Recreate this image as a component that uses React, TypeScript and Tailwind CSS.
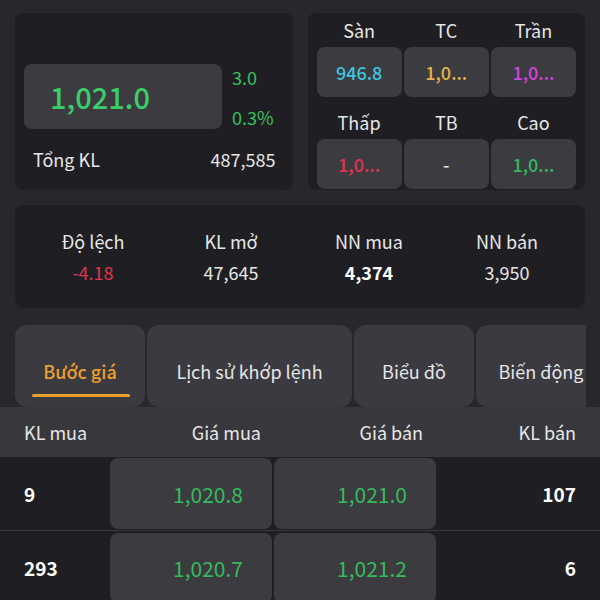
const stats = [
  [
    { label: "Sàn", value: "946.8", color: "text-[#3fc6df]" },
    { label: "TC", value: "1,0...", color: "text-[#e3b447]" },
    { label: "Trần", value: "1,0...", color: "text-[#d541dc]" },
  ],
  [
    { label: "Thấp", value: "1,0...", color: "text-[#e0334f]" },
    { label: "TB", value: "-", color: "text-[#e6e6e6]" },
    { label: "Cao", value: "1,0...", color: "text-[#35b85e]" },
  ],
];

const summary = [
  { label: "Độ lệch", value: "-4.18", cls: "text-[#e0334f]" },
  { label: "KL mở", value: "47,645", cls: "text-[#e6e6e6]" },
  { label: "NN mua", value: "4,374", cls: "text-white font-semibold" },
  { label: "NN bán", value: "3,950", cls: "text-[#e6e6e6]" },
];

const tabs = [
  { label: "Bước giá", w: "w-[130px]" },
  { label: "Lịch sử khớp lệnh", w: "w-[205px]" },
  { label: "Biểu đồ", w: "w-[120px]" },
  { label: "Biến động", w: "w-[130px]" },
];

const rows = [
  { buyQty: "9", buy: "1,020.8", sell: "1,021.0", sellQty: "107" },
  { buyQty: "293", buy: "1,020.7", sell: "1,021.2", sellQty: "6" },
];

export default function App() {
  return (
    <div className="h-[600px] w-[600px] overflow-hidden bg-[#28282c] font-['Noto_Sans_CJK_SC',sans-serif] text-[#e6e6e6]">
      {/* Price + reference prices */}
      <div className="flex gap-[15px] px-[15px] pt-[13px]">
        <div className="flex h-[177px] flex-1 flex-col rounded-lg bg-[#1f1f23] px-[9px]">
          <div className="mt-[51px] flex items-center">
            <div className="flex h-[65px] w-[198px] items-center rounded-lg bg-[#3b3b40] pl-[26px] text-[29px] font-medium leading-none text-[#3acd68]">
              1,021.0
            </div>
            <div className="ml-[10px] flex flex-col gap-[16px] text-[18px] leading-[24px] text-[#38c061]">
              <span>3.0</span>
              <span>0.3%</span>
            </div>
          </div>
          <div className="mt-[18px] flex items-center justify-between pl-[9px] pr-[8px] text-[18px] leading-[24px]">
            <span>Tổng KL</span>
            <span>487,585</span>
          </div>
        </div>

        <div className="flex h-[177px] flex-1 flex-col rounded-lg bg-[#1f1f23] px-[9px]">
          {stats.map((row, i) => (
            <div key={i} className={i === 1 ? "mt-[8px]" : ""}>
              <div className="grid h-[34px] grid-cols-3 gap-[2px] text-[18px] leading-[24px]">
                {row.map((s) => (
                  <div key={s.label} className="flex items-center justify-center">
                    {s.label}
                  </div>
                ))}
              </div>
              <div className="grid grid-cols-3 gap-[2px]">
                {row.map((s) => (
                  <div
                    key={s.label}
                    className={`flex h-[50px] items-center justify-center rounded-lg bg-[#3b3b40] text-[18px] font-medium leading-[24px] ${s.color}`}
                  >
                    {s.value}
                  </div>
                ))}
              </div>
            </div>
          ))}
        </div>
      </div>

      {/* Summary */}
      <div className="mx-[15px] mt-[15px] grid h-[103px] grid-cols-4 items-center rounded-lg bg-[#1f1f23] px-[9px]">
        {summary.map((s) => (
          <div key={s.label} className="flex flex-col items-center gap-[7px] text-[18px] leading-[24px]">
            <span>{s.label}</span>
            <span className={s.cls}>{s.value}</span>
          </div>
        ))}
      </div>

      {/* Tabs */}
      <div className="mx-[15px] mt-[17px] flex w-[571px] gap-[2px] overflow-hidden">
        {tabs.map((t, i) => (
          <div
            key={t.label}
            className={`relative flex h-[82px] shrink-0 items-center justify-center rounded-xl bg-[#3a3a40] pt-[10px] text-[18px] leading-[24px] ${t.w} ${
              i === 0 ? "font-medium text-[#ee9f2e]" : "text-[#e6e6e6]"
            }`}
          >
            <span className="whitespace-nowrap">{t.label}</span>
            {i === 0 && (
              <span className="absolute bottom-[10px] left-[17px] h-[3px] w-[98px] rounded-full bg-[#ee9f2e]" />
            )}
          </div>
        ))}
      </div>

      {/* Order book */}
      <div className="flex h-[50px] items-center bg-[#38383c] px-[24px] text-[18px] leading-[24px]">
        <span className="w-[86px]">KL mua</span>
        <span className="w-[162px] pr-[11px] text-right">Giá mua</span>
        <span className="ml-[2px] w-[162px] pr-[13px] text-right">Giá bán</span>
        <span className="flex-1 text-right">KL bán</span>
      </div>
      {rows.map((r, i) => (
        <div
          key={i}
          className={`flex h-[73px] items-center bg-[#1f1f23] px-[24px] text-[19px] leading-[24px] ${
            i > 0 ? "border-t border-[#3a3a3e] pt-[2px]" : "py-[1px]"
          }`}
        >
          <span className="w-[86px] font-semibold text-white">{r.buyQty}</span>
          <span className="flex h-full w-[162px] items-center justify-end rounded-lg bg-[#3b3b40] pr-[29px] text-[21px] text-[#34bb5c]">
            {r.buy}
          </span>
          <span className="ml-[2px] flex h-full w-[162px] items-center justify-end rounded-lg bg-[#3b3b40] pr-[29px] text-[21px] text-[#34bb5c]">
            {r.sell}
          </span>
          <span className="flex-1 text-right font-semibold text-white">{r.sellQty}</span>
        </div>
      ))}
    </div>
  );
}
